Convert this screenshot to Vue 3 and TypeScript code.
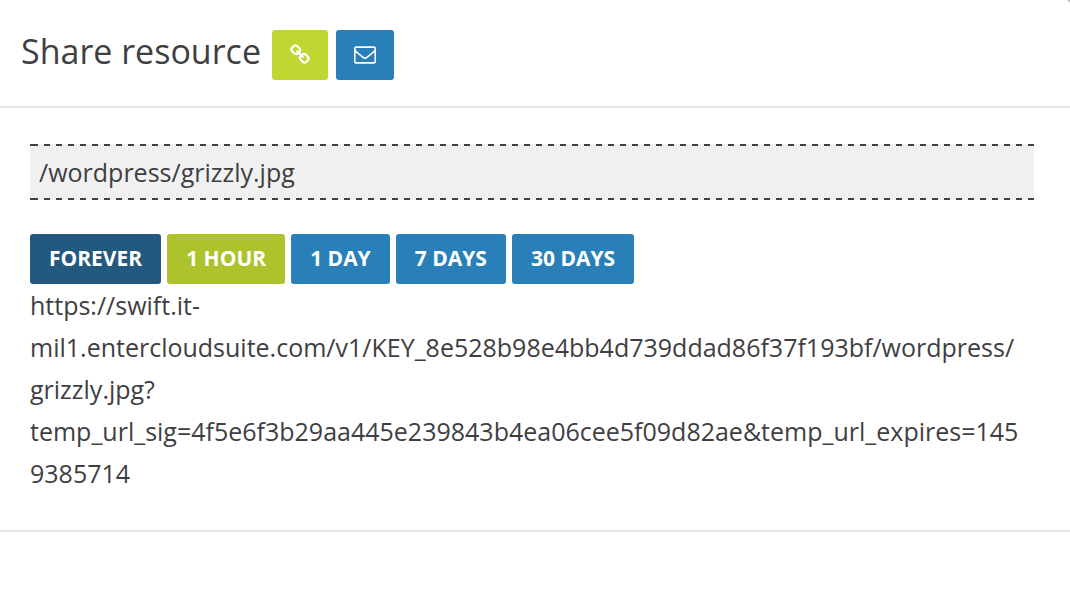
<script setup lang="ts">
import { ref } from 'vue'

interface Duration {
  id: string
  label: string
}

const resourcePath = '/wordpress/grizzly.jpg'
const durations: Duration[] = [
  { id: 'forever', label: 'FOREVER' },
  { id: 'hour', label: '1 HOUR' },
  { id: 'day', label: '1 DAY' },
  { id: 'week', label: '7 DAYS' },
  { id: 'month', label: '30 DAYS' },
]
const selected = ref('hour')
const shareUrl =
  'https://swift.it-mil1.entercloudsuite.com/v1/KEY_8e528b98e4bb4d739ddad86f37f193bf/wordpress/grizzly.jpg?temp_url_sig=4f5e6f3b29aa445e239843b4ea06cee5f09d82ae&temp_url_expires=1459385714'
</script>

<template>
  <section class="dialog" aria-labelledby="share-title">
    <header class="header">
      <h1 id="share-title" class="title">Share resource</h1>
      <button class="icon-button link" type="button" aria-label="Share by link">
        <svg class="icon" viewBox="0 0 1664 1664" aria-hidden="true">
          <path d="M1456 1216q0-40-28-68l-208-208q-28-28-68-28-42 0-72 32 3 3 19 18.500t21.500 21.500 15 19 13 25.500 3.500 27.500q0 40-28 68t-68 28q-15 0-27.500-3.500t-25.500-13-19-15-21.500-21.500-18.500-19q-33 31-33 73 0 40 28 68l206 207q27 27 68 27 40 0 68-26l147-146q28-28 28-67zm-703-705q0-40-28-68l-206-207q-28-28-68-28-39 0-68 27l-147 146q-28 28-28 67 0 40 28 68l208 208q27 27 68 27 42 0 72-31-3-3-19-18.500t-21.500-21.500-15-19-13-25.500-3.500-27.500q0-40 28-68t68-28q15 0 27.500 3.500t25.500 13 19 15 21.500 21.500 18.500 19q33-31 33-73zm895 705q0 120-85 203l-147 146q-83 83-203 83-121 0-204-85l-206-207q-83-83-83-203 0-123 88-209l-88-88q-86 88-208 88-120 0-204-84l-208-208q-84-84-84-204t85-203l147-146q83-83 203-83 121 0 204 85l206 207q83 83 83 203 0 123-88 209l88 88q86-88 208-88 120 0 204 84l208 208q84 84 84 204z" />
        </svg>
      </button>
      <button class="icon-button" type="button" aria-label="Share by email">
        <svg class="icon mail" viewBox="0 0 1792 1408" aria-hidden="true">
          <path d="M1664 1248v-768q-32 36-69 66-268 206-426 338-51 43-83 67t-86.500 48.500-102.500 24.500h-2q-48 0-102.500-24.500t-86.500-48.500-83-67q-158-132-426-338-37-30-69-66v768q0 13 9.500 22.500t22.500 9.500h1472q13 0 22.500-9.500t9.500-22.500zm0-1051v-24.500l-.5-13-3-12.500-5.500-9-9-7.500-14-2.500h-1472q-13 0-22.500 9.500t-9.500 22.500q0 168 147 284 193 152 401 317 6 5 35 29.500t46 37.500 44.500 31.500 50.500 27.500 43 9h2q20 0 43-9t50.500-27.500 44.500-31.500 46-37.500 35-29.500q208-165 401-317 54-43 100.500-115.500t46.500-131.500zm128-37v1088q0 66-47 113t-113 47h-1472q-66 0-113-47t-47-113v-1088q0-66 47-113t113-47h1472q66 0 113 47t47 113z" />
        </svg>
      </button>
    </header>

    <div class="body">
      <p class="resource">{{ resourcePath }}</p>
      <div class="durations" role="group" aria-label="Link duration">
        <button
          v-for="duration in durations"
          :key="duration.id"
          type="button"
          class="duration"
          :class="[duration.id, { selected: selected === duration.id }]"
          :aria-pressed="selected === duration.id"
          @click="selected = duration.id"
        >
          {{ duration.label }}
        </button>
      </div>
      <p class="url">{{ shareUrl }}</p>
    </div>
  </section>
</template>

<style>
body {
  background: #aaa;
}
</style>

<style scoped>
.dialog {
  box-sizing: border-box;
  min-height: 100vh;
  border-top-right-radius: 4px;
  background: #fff;
  color: #3f3e43;
  font-family: "Open Sans", "Noto Sans", sans-serif;
  font-size: 25px;
  line-height: 42px;
}

.header {
  display: flex;
  align-items: center;
  gap: 8px;
  padding: 30px 21px 26px;
  border-bottom: 2px solid #e5e5e5;
}

.title {
  margin: 0 3px 8px 0;
  font-size: 34px;
  font-weight: 400;
  line-height: 42px;
}

.icon-button,
.duration {
  display: flex;
  align-items: center;
  justify-content: center;
  height: 50px;
  border: 0;
  border-radius: 3px;
  background: #2980b9;
  color: #fff;
  cursor: pointer;
}

.icon-button {
  width: 58px;
  padding: 0;
}

.link {
  width: 56px;
  padding-bottom: 2px;
  background: #bfd730;
}

.icon {
  width: 20px;
  height: 20px;
  fill: currentColor;
}

.mail {
  width: 22px;
  height: 18px;
}

.body {
  padding: 36px 36px 36px 30px;
  border-bottom: 2px solid #e5e5e5;
}

.resource {
  --dashes: repeating-linear-gradient(to left, #3f3e43 0 6px, transparent 6px 12px);
  --corner: linear-gradient(#3f3e43, #3f3e43);
  margin: 0 0 34px;
  padding: 7px 9px;
  background:
    var(--corner) left top / 2px 2px no-repeat,
    var(--corner) left bottom / 2px 2px no-repeat,
    var(--dashes) top / 100% 2px no-repeat,
    var(--dashes) bottom / 100% 2px no-repeat,
    #f1f1f1;
}

.durations {
  display: flex;
  flex-wrap: wrap;
  gap: 6px;
}

.duration {
  padding: 0 19px 2px;
  font-family: inherit;
  font-size: 21px;
  font-weight: 700;
}

.forever {
  background: #23597f;
}

.selected {
  background: #adc22b;
}

.url {
  margin: 0;
  padding-right: 12px;
  overflow-wrap: anywhere;
}
</style>
